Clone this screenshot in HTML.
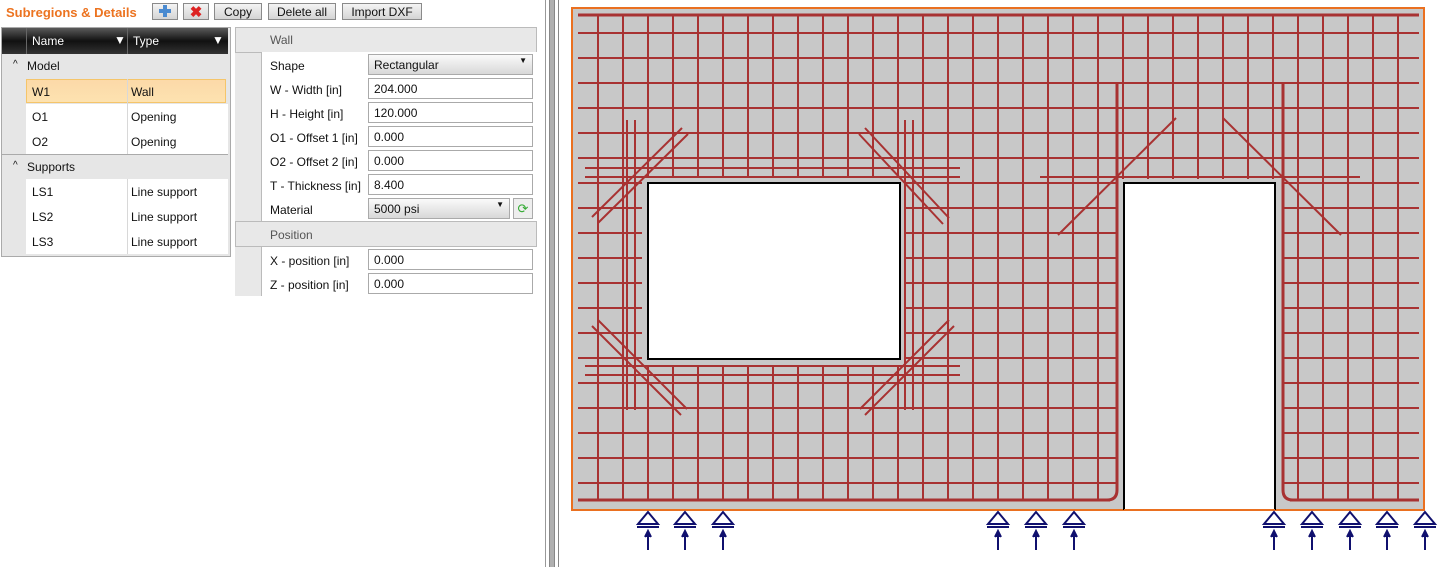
<!DOCTYPE html>
<html><head><meta charset="utf-8"><style>
body{margin:0;width:1443px;height:567px;background:#fff;font-family:"Liberation Sans",sans-serif;font-size:12px;color:#111;position:relative;overflow:hidden}
.a{position:absolute}
.btn{position:absolute;top:3px;height:17px;border:1px solid #8a8a8a;background:linear-gradient(#f4f4f4,#d4d4d4);font-size:12px;text-align:center;line-height:17px;box-sizing:border-box}
.row{position:absolute;left:26px;width:202px;height:25px;border-bottom:1px solid #d8d8d8;background:#fff}
.row span{position:absolute;top:6px}
.inp{position:absolute;left:368px;width:165px;height:21px;border:1px solid #aaa;background:#fff;box-sizing:border-box;padding:3px 0 0 5px;font-size:12px}
.lab{position:absolute;left:270px;font-size:12px}
</style></head><body>
<div class="a" style="left:6px;top:5px;font-size:13px;font-weight:bold;color:#ec7320">Subregions &amp; Details</div>
<div class="btn" style="left:152px;width:26px"><svg width="16" height="14" viewBox="0 0 16 14"><rect x="6" y="1" width="4" height="12" fill="#4a8ad0"/><rect x="2" y="5" width="12" height="4" fill="#4a8ad0"/></svg></div>
<div class="btn" style="left:183px;width:26px;color:#d22;font-weight:bold;font-size:15px">✖</div>
<div class="btn" style="left:214px;width:48px">Copy</div>
<div class="btn" style="left:268px;width:68px">Delete all</div>
<div class="btn" style="left:342px;width:80px">Import DXF</div>

<div class="a" style="left:1px;top:27px;width:228px;height:228px;border:1px solid #aaa;background:#e6e6e6"></div>
<div class="a" style="left:2px;top:28px;width:226px;height:26px;background:linear-gradient(#5a5a5a,#111 50%,#333)"></div>
<div class="a" style="left:26px;top:28px;width:1px;height:26px;background:#666"></div>
<div class="a" style="left:127px;top:28px;width:1px;height:26px;background:#666"></div>
<div class="a" style="left:32px;top:34px;color:#fff">Name</div><div class="a" style="left:114px;top:33px;color:#fff">▼</div>
<div class="a" style="left:133px;top:34px;color:#fff">Type</div><div class="a" style="left:212px;top:33px;color:#fff">▼</div>
<div class="a" style="left:13px;top:59px;font-size:10px">^</div><div class="a" style="left:27px;top:59px">Model</div>
<div class="row" style="top:79px;background:linear-gradient(#fcd9a8,#fde2b0);border:1px solid #f5c56a;height:22px;width:198px"><span style="left:5px;top:5px">W1</span><span style="left:104px;top:5px">Wall</span></div>
<div class="row" style="top:104px"><span style="left:6px">O1</span><span style="left:105px">Opening</span></div>
<div class="row" style="top:129px"><span style="left:6px">O2</span><span style="left:105px">Opening</span></div>
<div class="a" style="left:2px;top:154px;width:226px;height:1px;background:#aaa"></div>
<div class="a" style="left:13px;top:160px;font-size:10px">^</div><div class="a" style="left:27px;top:160px">Supports</div>
<div class="row" style="top:179px"><span style="left:6px">LS1</span><span style="left:105px">Line support</span></div>
<div class="row" style="top:204px"><span style="left:6px">LS2</span><span style="left:105px">Line support</span></div>
<div class="row" style="top:229px;border-bottom:none"><span style="left:6px">LS3</span><span style="left:105px">Line support</span></div>
<div class="a" style="left:127px;top:79px;width:1px;height:75px;background:#d8d8d8"></div>
<div class="a" style="left:127px;top:179px;width:1px;height:75px;background:#d8d8d8"></div>

<div class="a" style="left:235px;top:27px;width:301px;height:269px;background:#e8e8e8"></div>
<div class="a" style="left:235px;top:27px;width:300px;height:24px;border:1px solid #bbb;background:#e8e8e8"></div>
<div class="a" style="left:270px;top:33px;color:#555">Wall</div>
<div class="a" style="left:261px;top:52px;width:275px;height:169px;background:#fff;border-left:1px solid #bbb"></div>
<div class="lab" style="top:59px">Shape</div><div class="inp" style="top:54px;background:linear-gradient(#fafafa,#d8d8d8)">Rectangular<span style="position:absolute;right:5px;top:1px;font-size:8px">▼</span></div>
<div class="lab" style="top:83px">W - Width [in]</div><div class="inp" style="top:78px">204.000</div>
<div class="lab" style="top:107px">H - Height [in]</div><div class="inp" style="top:102px">120.000</div>
<div class="lab" style="top:131px">O1 - Offset 1 [in]</div><div class="inp" style="top:126px">0.000</div>
<div class="lab" style="top:155px">O2 - Offset 2 [in]</div><div class="inp" style="top:150px">0.000</div>
<div class="lab" style="top:179px">T - Thickness [in]</div><div class="inp" style="top:174px">8.400</div>
<div class="lab" style="top:203px">Material</div><div class="inp" style="top:198px;width:142px;background:linear-gradient(#fafafa,#d8d8d8)">5000 psi<span style="position:absolute;right:5px;top:1px;font-size:8px">▼</span></div>
<div class="a" style="left:513px;top:198px;width:20px;height:21px;border:1px solid #aaa;box-sizing:border-box;background:#eee;color:#3a3;text-align:center;font-size:13px;line-height:19px">⟳</div>
<div class="a" style="left:235px;top:221px;width:300px;height:24px;border:1px solid #bbb;background:#e8e8e8"></div>
<div class="a" style="left:270px;top:228px;color:#555">Position</div>
<div class="a" style="left:261px;top:247px;width:275px;height:49px;background:#fff;border-left:1px solid #bbb"></div>
<div class="lab" style="top:254px">X - position [in]</div><div class="inp" style="top:249px">0.000</div>
<div class="lab" style="top:278px">Z - position [in]</div><div class="inp" style="top:273px">0.000</div>

<div class="a" style="left:545px;top:0;width:1px;height:567px;background:#999"></div>
<div class="a" style="left:549px;top:0;width:4px;height:567px;background:#b0b0b0;border-left:1px solid #888;border-right:1px solid #888"></div>
<div class="a" style="left:558px;top:0;width:1px;height:567px;background:#888"></div>

<svg class="a" style="left:0;top:0" width="1443" height="567">
<defs><pattern id="g" x="597" y="57" width="25" height="25" patternUnits="userSpaceOnUse"><rect x="0" y="0" width="2" height="25" fill="#a83232"/><rect x="0" y="0" width="25" height="2" fill="#a83232"/></pattern></defs>
<rect x="572" y="8" width="852" height="502" fill="#c8c8c8" stroke="#ea7020" stroke-width="2"/>
<rect x="578" y="15" width="841" height="486" fill="url(#g)"/>
<g stroke="#a83232" stroke-width="2" fill="none">
<line x1="578" y1="15" x2="1419" y2="15" stroke-width="3"/>
<line x1="578" y1="500" x2="1110" y2="500" stroke-width="3"/>
<line x1="1290" y1="500" x2="1419" y2="500" stroke-width="3"/>
</g>
<rect x="642" y="177" width="264" height="189" fill="#c8c8c8"/>
<rect x="1118" y="179" width="164" height="330" fill="#c8c8c8"/>
<g stroke="#a83232" stroke-width="2" fill="none">
<line x1="585" y1="168" x2="960" y2="168"/><line x1="585" y1="177" x2="960" y2="177"/>
<line x1="585" y1="366" x2="960" y2="366"/><line x1="585" y1="375" x2="960" y2="375"/>
<line x1="627" y1="120" x2="627" y2="410"/><line x1="635" y1="120" x2="635" y2="410"/>
<line x1="905" y1="120" x2="905" y2="410"/><line x1="913" y1="120" x2="913" y2="410"/>
<line x1="592" y1="217" x2="682" y2="128"/><line x1="598" y1="223" x2="688" y2="134"/>
<line x1="865" y1="128" x2="949" y2="218"/><line x1="859" y1="134" x2="943" y2="224"/>
<line x1="592" y1="326" x2="681" y2="415"/><line x1="598" y1="320" x2="687" y2="409"/>
<line x1="860" y1="409" x2="949" y2="320"/><line x1="865" y1="415" x2="954" y2="326"/>
<line x1="1040" y1="177" x2="1360" y2="177"/>
<line x1="1058" y1="235" x2="1176" y2="118"/><line x1="1223" y1="118" x2="1341" y2="235"/>
<path d="M1117 83 V490 Q1117 500 1107 500 H1100" stroke-width="3"/>
<path d="M1283 83 V490 Q1283 500 1293 500 H1300" stroke-width="3"/>
</g>
<rect x="648" y="183" width="252" height="176" fill="#fff" stroke="#000" stroke-width="2"/>
<rect x="1124" y="183" width="151" height="327" fill="#fff"/>
<path d="M1124 510 V183 H1275 V510" fill="none" stroke="#000" stroke-width="2"/>
<line x1="1124" y1="510" x2="1275" y2="510" stroke="#ea7020" stroke-width="2"/>
<g stroke="#10106e" stroke-width="2" fill="none">
<g id="s"><path d="M648 512 L638 524 H658 Z"/><line x1="637" y1="527" x2="659" y2="527"/><line x1="648" y1="532" x2="648" y2="550"/><path d="M645 537 L648 531 L651 537" fill="#10106e"/></g>
<use href="#s" x="37"/><use href="#s" x="75"/>
<use href="#s" x="350"/><use href="#s" x="388"/><use href="#s" x="426"/>
<use href="#s" x="626"/><use href="#s" x="664"/><use href="#s" x="702"/><use href="#s" x="739"/><use href="#s" x="777"/>
</g>
</svg>
</body></html>
